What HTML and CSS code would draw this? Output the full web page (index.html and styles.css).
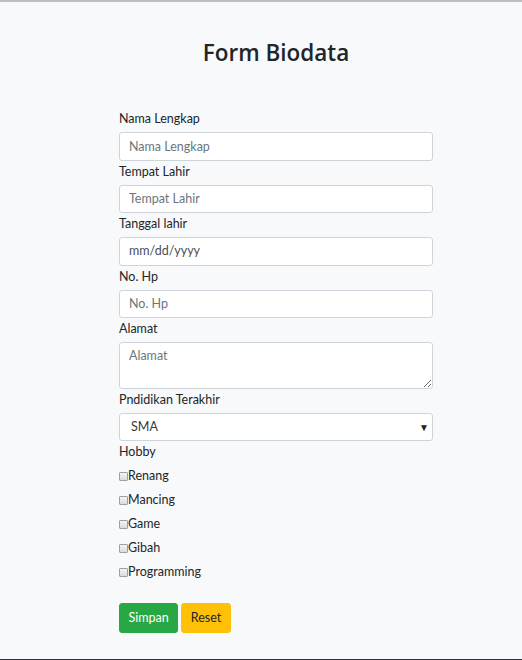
FILE: index.html
```html
<!DOCTYPE html>
<html lang="id">
<head>
<meta charset="utf-8">
<title>Form Biodata</title>
<link rel="stylesheet" href="styles.css">
</head>
<body>
<div class="page">
  <h2 class="title">Form Biodata</h2>
  <form class="form">
    <label class="lbl" for="nama">Nama Lengkap</label>
    <input class="ctrl" id="nama" type="text" placeholder="Nama Lengkap">
    <label class="lbl" for="tempat">Tempat Lahir</label>
    <input class="ctrl" id="tempat" type="text" placeholder="Tempat Lahir">
    <label class="lbl" for="tgl">Tanggal lahir</label>
    <div class="ctrl date">mm/dd/yyyy</div>
    <label class="lbl" for="hp">No. Hp</label>
    <input class="ctrl" id="hp" type="text" placeholder="No. Hp">
    <label class="lbl" for="alamat">Alamat</label>
    <textarea class="ctrl area" id="alamat" placeholder="Alamat"></textarea>
    <label class="lbl" for="pend">Pndidikan Terakhir</label>
    <div class="ctrl select"><span>SMA</span><span class="arrow">▼</span></div>
    <div class="lbl hobby">Hobby</div>
    <label class="check"><input type="checkbox" class="box">Renang</label>
    <label class="check"><input type="checkbox" class="box">Mancing</label>
    <label class="check"><input type="checkbox" class="box">Game</label>
    <label class="check"><input type="checkbox" class="box">Gibah</label>
    <label class="check"><input type="checkbox" class="box">Programming</label>
    <div class="actions">
      <button type="button" class="btn green">Simpan</button>
      <button type="button" class="btn yellow">Reset</button>
    </div>
  </form>
</div>
</body>
</html>
```
FILE: styles.css
```css
html, body {
  margin: 0;
  padding: 0;
  height: 100%;
}
body {
  background: #f8f9fa;
  font-family: "Lato", "Open Sans", sans-serif;
  font-size: 12.5px;
  color: #212529;
  box-sizing: border-box;
  border-top: 2px solid #bdbdbd;
  border-bottom: 1px solid #2f3337;
  overflow: hidden;
}
.page {
  padding-top: 36px;
}
.title {
  margin: 0;
  text-align: center;
  font-family: "Open Sans", "Lato", sans-serif;
  font-size: 22.5px;
  font-weight: 600;
  line-height: 29px;
  padding-left: 30px;
}
.form {
  width: 314px;
  margin: 43px 0 0 119px;
  display: flex;
  flex-direction: column;
}
.lbl {
  display: block;
  line-height: 18px;
  margin-bottom: 4px;
}
.hobby {
  margin-bottom: 6px;
}
.ctrl {
  box-sizing: border-box;
  height: 28.5px;
  width: 100%;
  margin: 0 0 2px;
  padding: 4px 9px;
  font: inherit;
  line-height: 18px;
  color: #495057;
  background: #fff;
  border: 1px solid #ced4da;
  border-radius: 3px;
}
.ctrl::placeholder {
  color: #6c757d;
}
.date {
  color: #495057;
}
.area {
  height: 46.5px;
  resize: vertical;
}
.select {
  display: flex;
  justify-content: space-between;
  align-items: center;
  padding-left: 11px;
  padding-right: 3px;
  color: #343a40;
}
.arrow {
  font-size: 10px;
  color: #222;
}
.check {
  display: flex;
  align-items: center;
  line-height: 18px;
  margin-bottom: 6px;
}
.box {
  appearance: none;
  -webkit-appearance: none;
  box-sizing: border-box;
  width: 9px;
  height: 9px;
  margin: 0;
  border: 1px solid #a0a0a0;
  border-radius: 1px;
  background: linear-gradient(#f4f4f4, #dcdcdc);
}
.actions {
  margin-top: 16px;
  display: flex;
  gap: 3px;
}
.btn {
  font: inherit;
  line-height: 18px;
  padding: 5px 8.5px;
  border: 1px solid transparent;
  border-radius: 3px;
}
.green {
  background: #28a745;
  border-color: #28a745;
  color: #fff;
}
.yellow {
  background: #ffc107;
  border-color: #ffc107;
  color: #212529;
}
```
